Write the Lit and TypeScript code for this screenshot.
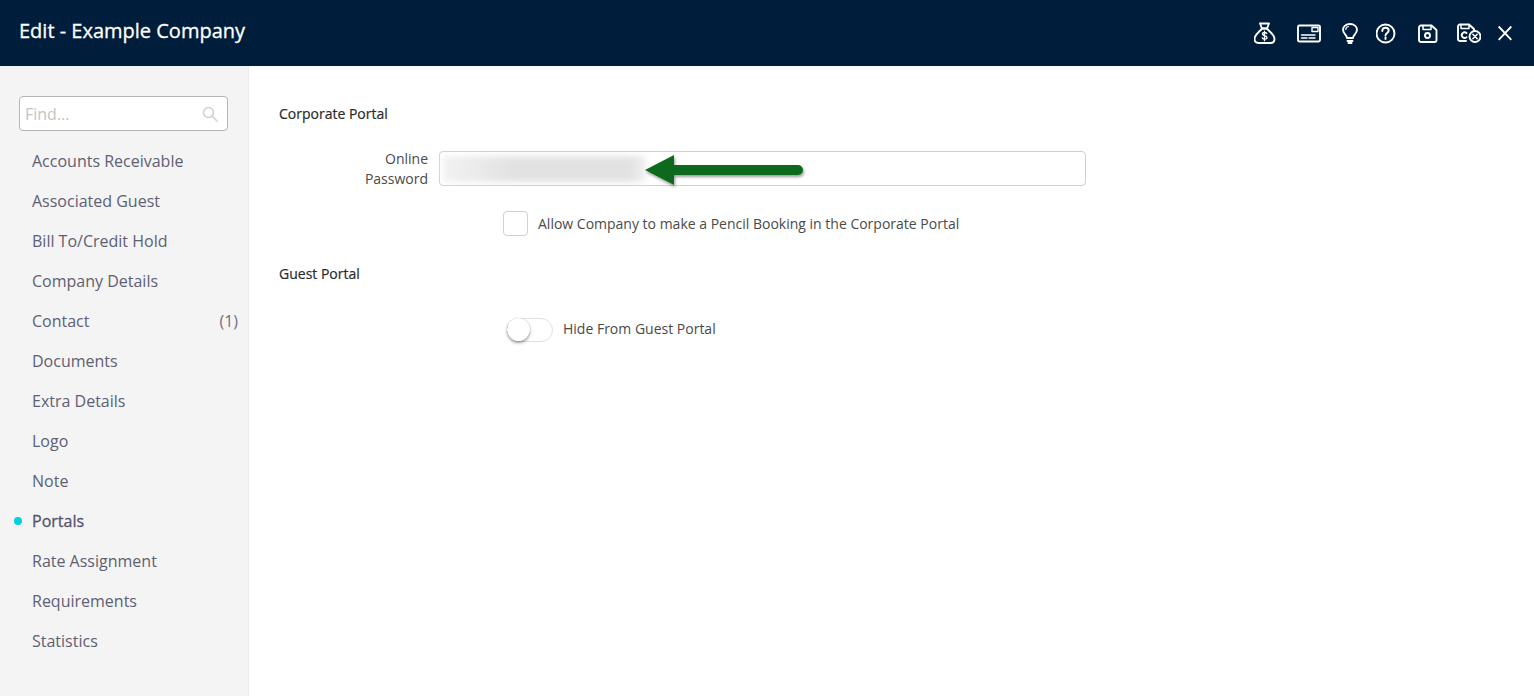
import { LitElement, css, html, svg } from "lit";
import { customElement } from "lit/decorators.js";

const NAV = [
    ["Accounts Receivable"],
    ["Associated Guest"],
    ["Bill To/Credit Hold"],
    ["Company Details"],
    ["Contact", "(1)"],
    ["Documents"],
    ["Extra Details"],
    ["Logo"],
    ["Note"],
    ["Portals"],
    ["Rate Assignment"],
    ["Requirements"],
    ["Statistics"],
];

const ACTIVE = "Portals";

// header icons, w is the drawn width and gap the space after it
const ICONS = [
    {
        w: 22,
        gap: 21,
        body: svg`
            <path d="M6 1.5h9l-2 5H8z" />
            <path d="M8 6.5h5c1.5 2.5 7.5 6 7.5 10.5 0 2.5-1.5 4-4 4h-12c-2.5 0-4-1.5-4-4C.5 12.5 6.500 9 8 6.5z" />
            <path d="M12.8 11.5c-.4-.7-1.2-1-2.2-1-1.2 0-2.1.6-2.1 1.6 0 2.3 4.5 1 4.5 3.4 0 1-1 1.6-2.3 1.6-1.100 0-2-.4-2.400-1.200M10.500 9.200v9.500" stroke-width="1.3" />
        `,
    },
    {
        w: 24,
        gap: 21,
        body: svg`
            <rect x="1" y="3.5" width="22" height="16" rx="1.5" />
            <rect x="15" y="5.5" width="6" height="4" stroke-width="1.4" />
            <path d="M4.500 13H18M4.500 16H10M12 16h6" stroke-width="1.4" />
        `,
    },
    {
        w: 16,
        gap: 18,
        body: svg`
            <path d="M5 16c0-3-4-4-4-8.500C1 4.500 4 2 8 2s7 2.500 7 5.500c0 4.500-4 5.500-4 8.500z" />
            <path d="M5.500 19h5M6.500 21h3" />
            <path d="M3.800 7.500c0-1.800 1.200-2.800 2.700-3" stroke-width="1.2" />
        `,
    },
    {
        w: 20,
        gap: 22,
        body: svg`
            <circle cx="9.500" cy="11.500" r="9" />
            <path d="M6.300 9c0-2 1.400-3.200 3.300-3.200 1.800 0 3.100 1.200 3.100 2.700 0 2.500-3.200 2.400-3.200 5" />
            <path d="M9.500 15.500V17" />
        `,
    },
    {
        w: 20,
        gap: 19,
        body: svg`
            <path d="M3 3.500h10.500l5 4.500v10a2 2 0 0 1-2 2H3a2 2 0 0 1-2-2V5.500a2 2 0 0 1 2-2z" />
            <path d="M5 3.500v4h8v-4" stroke-width="1.5" />
            <circle cx="9.500" cy="13.500" r="2.500" />
        `,
    },
    {
        w: 24,
        gap: 17,
        body: svg`
            <path d="M9 19H3a2 2 0 0 1-2-2V4.500a2 2 0 0 1 2-2h9l5 4.500v2" />
            <path d="M4 2.500v4h8v-4" stroke-width="1.5" />
            <path d="M9.500 11a2.800 2.800 0 1 0 0 4.200" />
            <circle cx="18" cy="14.500" r="5.500" />
            <path d="M15.800 12.300l4.400 4.400M20.200 12.300l-4.400 4.400" stroke-width="1.5" />
        `,
    },
    {
        w: 14,
        gap: 0,
        body: svg`<path d="M.7 4.500l12.600 13.300M13.300 4.500L.7 17.800" stroke-linecap="butt" />`,
    },
];

@customElement("app-root")
export class AppRoot extends LitElement {
    static styles = css`
        :host {
            display: flex;
            flex-direction: column;
            height: 696px;
            overflow: hidden;
            background: #fff;
            color: #4a4a4a;
            font-family: "Open Sans", sans-serif;
            font-size: 14px;
        }

        .topbar {
            flex: none;
            height: 66px;
            box-sizing: border-box;
            display: flex;
            align-items: center;
            justify-content: space-between;
            padding: 0 22px 0 19px;
            background: #001e3c;
            color: #fff;
        }

        .title {
            font-size: 20px;
            font-weight: 500;
            -webkit-text-stroke: 0.3px #fff;
            margin-bottom: 5px;
        }

        .actions {
            display: flex;
            align-items: center;
            margin-top: 2px;
        }

        .actions svg {
            display: block;
            height: 24px;
            fill: none;
            stroke: #fff;
            stroke-width: 1.9;
            stroke-linecap: round;
            stroke-linejoin: round;
        }

        .body {
            flex: 1;
            display: flex;
            min-height: 0;
        }

        .sidebar {
            flex: none;
            width: 249px;
            box-sizing: border-box;
            background: #f4f4f4;
            border-right: 1px solid #ececec;
            padding: 30px 10px 0 19px;
        }

        .find {
            width: 209px;
            height: 35px;
            box-sizing: border-box;
            display: flex;
            align-items: center;
            justify-content: space-between;
            padding: 0 9px 0 5px;
            background: #fff;
            border: 1px solid #b5b5b5;
            border-radius: 4px;
            color: #c4c4c4;
            font-size: 16px;
            margin-bottom: 10px;
        }

        .find svg {
            width: 16px;
            height: 16px;
            fill: none;
            stroke: #cfcfcf;
            stroke-width: 1.5;
            stroke-linecap: round;
        }

        .nav {
            display: flex;
            flex-direction: column;
        }

        .nav-item {
            position: relative;
            height: 40px;
            display: flex;
            align-items: center;
            justify-content: space-between;
            padding-left: 13px;
            color: #5e6073;
            font-size: 16px;
        }

        .nav-item.active {
            font-weight: 500;
            color: #53556a;
            -webkit-text-stroke: 0.3px #53556a;
        }

        .nav-item.active::before {
            content: "";
            position: absolute;
            left: -5px;
            top: 16px;
            width: 8px;
            height: 8px;
            border-radius: 50%;
            background: #00d0e0;
        }

        .count {
            color: #6f7080;
        }

        .content {
            flex: 1;
            padding: 38px 30px 0;
        }

        .section {
            font-weight: 500;
            color: #2a2a2a;
            -webkit-text-stroke: 0.2px #2a2a2a;
            line-height: 19px;
        }

        .row {
            display: flex;
            align-items: center;
        }

        .row-password {
            margin-top: 26px;
        }

        .field-label {
            width: 160px;
            box-sizing: border-box;
            padding-right: 11px;
            text-align: right;
            line-height: 20px;
        }

        .input {
            position: relative;
            width: 647px;
            height: 35px;
            box-sizing: border-box;
            align-self: flex-start;
            margin-top: 2px;
            background: #fff;
            border: 1px solid #d0d0d0;
            border-radius: 4px;
        }

        .blur {
            position: absolute;
            left: 3px;
            top: 4px;
            width: 203px;
            height: 26px;
            background: linear-gradient(90deg, #f2f2f2, #e2e2e2 35%, #e2e2e2 92%, #f0f0f0);
            filter: blur(3px);
        }

        .arrow {
            position: absolute;
            left: 205px;
            top: 0;
            width: 158px;
            height: 34px;
            overflow: visible;
        }

        .row-check {
            margin-top: 22px;
            padding-left: 224px;
            gap: 10px;
        }

        .checkbox {
            width: 25px;
            height: 25px;
            box-sizing: border-box;
            background: #fff;
            border: 1px solid #d0d0d0;
            border-radius: 4px;
        }

        .guest {
            margin-top: 28px;
        }

        .row-toggle {
            margin-top: 35px;
            padding-left: 228px;
            gap: 10px;
        }

        .row-toggle span {
            margin-bottom: 4px;
        }

        .toggle {
            position: relative;
            width: 46px;
            height: 24px;
            box-sizing: border-box;
            background: #fff;
            border: 1px solid #e2e2e2;
            border-radius: 12px;
        }

        .knob {
            position: absolute;
            left: -1px;
            top: -1px;
            width: 23px;
            height: 23px;
            border-radius: 50%;
            background: #fff;
            box-shadow: 0 2px 3px rgba(0, 0, 0, 0.35), 0 0 1px rgba(0, 0, 0, 0.3);
        }
    `;

    render() {
        return html`
            <div class="topbar">
                <div class="title">Edit - Example Company</div>
                <div class="actions">
                    ${ICONS.map(
                        (icon) => html`
                            <svg
                                viewBox="0 0 ${icon.w} 24"
                                style="width:${icon.w}px;margin-right:${icon.gap}px"
                            >
                                ${icon.body}
                            </svg>
                        `,
                    )}
                </div>
            </div>
            <div class="body">
                <div class="sidebar">
                    <div class="find">
                        <span>Find...</span>
                        <svg viewBox="0 0 16 16">
                            <circle cx="6.5" cy="6.5" r="5" />
                            <path d="M10.5 10.5l4.5 4.5" />
                        </svg>
                    </div>
                    <div class="nav">
                        ${NAV.map(
                            ([name, count]) => html`
                                <div class="nav-item ${name === ACTIVE ? "active" : ""}">
                                    <span>${name}</span>
                                    ${count ? html`<span class="count">${count}</span>` : ""}
                                </div>
                            `,
                        )}
                    </div>
                </div>
                <div class="content">
                    <div class="section">Corporate Portal</div>
                    <div class="row row-password">
                        <div class="field-label">Online<br />Password</div>
                        <div class="input">
                            <div class="blur"></div>
                            <svg class="arrow" viewBox="0 0 158 34">
                                <defs>
                                    <filter id="arrow-shadow" x="-10%" y="-30%" width="120%" height="170%">
                                        <feDropShadow dx="1" dy="2" stdDeviation="1.5" flood-color="#000" flood-opacity="0.4" />
                                    </filter>
                                </defs>
                                <path
                                    d="M0 18L29 3v10h124a5 5 0 0 1 0 10H29v10z"
                                    fill="#0e6b1a"
                                    filter="url(#arrow-shadow)"
                                />
                            </svg>
                        </div>
                    </div>
                    <div class="row row-check">
                        <div class="checkbox"></div>
                        <span>Allow Company to make a Pencil Booking in the Corporate Portal</span>
                    </div>
                    <div class="section guest">Guest Portal</div>
                    <div class="row row-toggle">
                        <div class="toggle"><div class="knob"></div></div>
                        <span>Hide From Guest Portal</span>
                    </div>
                </div>
            </div>
        `;
    }
}
